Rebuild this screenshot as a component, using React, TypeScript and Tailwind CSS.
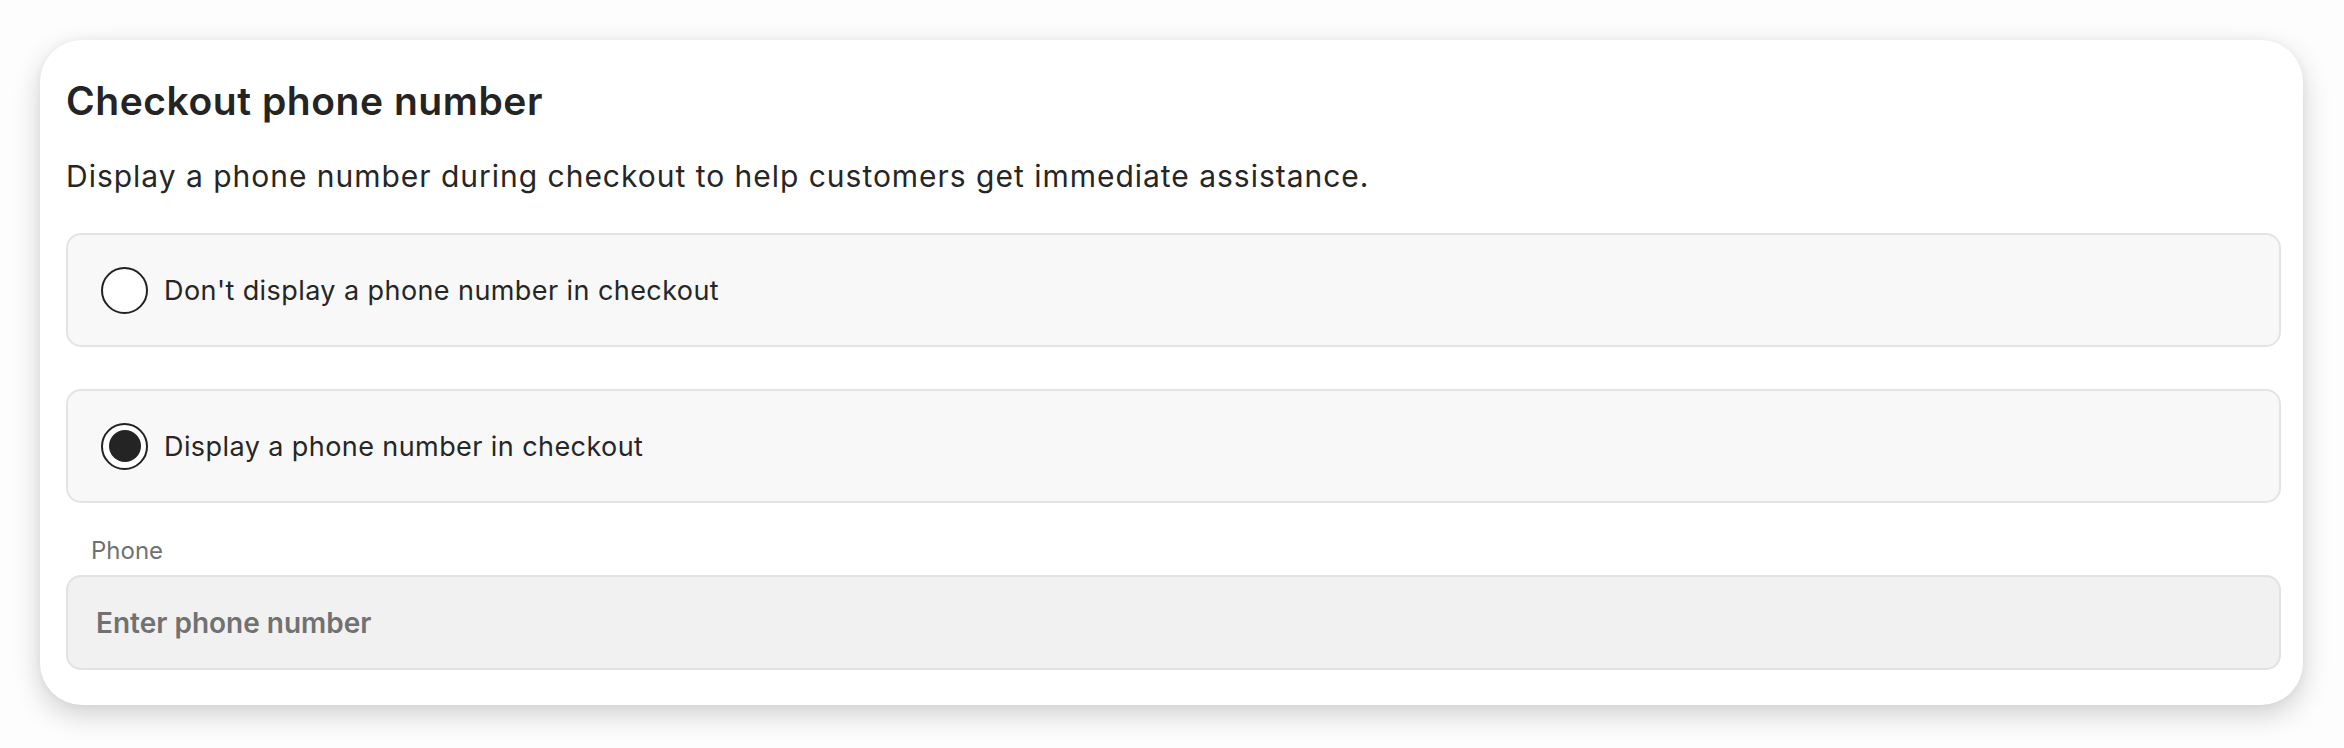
import { useState } from 'react';

const OPTIONS = [
  { value: 'hide', label: "Don't display a phone number in checkout" },
  { value: 'show', label: 'Display a phone number in checkout' },
];

function Radio({ checked }: { checked: boolean }) {
  return (
    <span className="flex h-[47px] w-[47px] shrink-0 items-center justify-center rounded-full border-2 border-[#222222] bg-white">
      {checked && <span className="h-[32px] w-[32px] rounded-full bg-[#242424]" />}
    </span>
  );
}

export default function App() {
  const [choice, setChoice] = useState('show');

  return (
    <div className="min-h-[748px] bg-[#fdfdfd] pl-[40px] pr-[41px] pt-[40px] font-['Inter',sans-serif]">
      <div className="rounded-[42px] bg-white pb-[35px] pl-[26px] pr-[22px] pt-[37px] shadow-[0_10px_28px_rgba(0,0,0,0.18),0_0_8px_rgba(0,0,0,0.04)]">
        <h2 className="text-[39px] font-semibold leading-[47px] tracking-[0.55px] text-[#242424]">Checkout phone number</h2>
        <p className="mt-[34px] text-[30px] leading-[36px] tracking-[0.98px] text-[#262626]">
          Display a phone number during checkout to help customers get immediate assistance.
        </p>

        <div className="mt-[39px] flex flex-col gap-[42px]">
          {OPTIONS.map(opt => (
            <button
              key={opt.value}
              type="button"
              onClick={() => setChoice(opt.value)}
              className="flex h-[114px] w-full items-center gap-[16px] rounded-[15px] border-2 border-[#e4e4e4] bg-[#f8f8f8] pl-[33px] text-left">
              <Radio checked={choice === opt.value} />
              <span className="text-[27px] leading-[33px] tracking-[0.42px] text-[#262626]">{opt.label}</span>
            </button>
          ))}
        </div>

        <label htmlFor="phone" className="mt-[33px] block pl-[25px] text-[24px] leading-[29px] text-[#717171]">
          Phone
        </label>
        <input
          id="phone"
          type="text"
          placeholder="Enter phone number"
          className="mt-[10px] block h-[95px] w-full rounded-[15px] border-2 border-[#e2e2e2] bg-[#f1f1f1] px-[28px] text-[28px] font-semibold text-[#262626] outline-none placeholder:text-[#717171]"
        />
      </div>
    </div>
  );
}
